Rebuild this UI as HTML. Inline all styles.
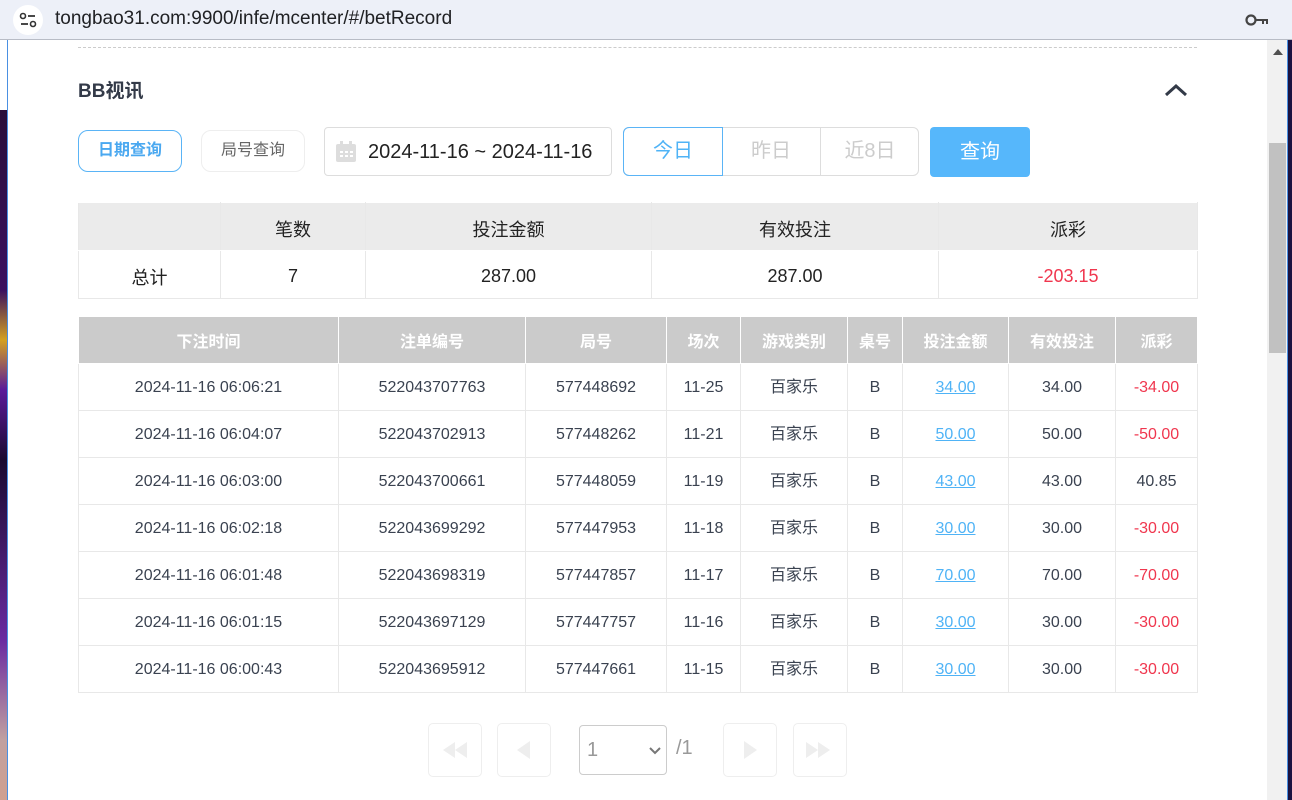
<!DOCTYPE html>
<html><head><meta charset="utf-8"><style>
*{box-sizing:border-box;margin:0;padding:0}
body{width:1292px;height:800px;overflow:hidden;background:#fff;font-family:"Liberation Sans","Noto Sans CJK SC",sans-serif;position:relative}
.abs{position:absolute}
.bar{left:0;top:0;width:1292px;height:40px;background:#edf0f8;border-bottom:1px solid #b8bcc6}
.url{left:55px;top:8px;font-size:19px;color:#202124}
.site{left:13px;top:5px;width:30px;height:30px;border-radius:50%;background:#fff}
.lstrip{left:0;top:40px;width:8px;height:760px;background:linear-gradient(#fff 0,#fff 70px,#2a0f3a 70px,#3a1060 250px,#d4a020 300px,#5a1a9a 350px,#1a0a30 420px,#6a2aa0 600px,#c0a0a0 700px,#d0a090 760px);border-right:1px solid #4a90e2}
.rstrip{left:1287px;top:40px;width:5px;height:760px;background:#1a1240;border-left:1px solid #4a90e2}
.sb{left:1267px;top:40px;width:20px;height:760px;background:#f1f1f1}
.thumb{left:1269px;top:143px;width:17px;height:210px;background:#c1c1c1}
.dash{left:78px;top:47px;width:1119px;border-top:1px dashed #ccc}
.title{left:78px;top:76px;font-size:19px;font-weight:bold;color:#333a48}
.btn{border-radius:10px;font-size:16px;text-align:center;line-height:40px;height:42px}
table{border-collapse:collapse;position:absolute}
td,th{text-align:center;border:1px solid #e8e8e8}
.sum td{height:48px;font-size:18px;color:#222;padding-top:4px}
.sum tr:first-child td{background:#ebebeb;border-color:#fff #e8e8e8}
.det th{background:#cbcbcb;color:#fff;font-size:16px;height:46px;border:1px solid #fff;border-top:0}
.det td{height:47px;font-size:16px;color:#3a4250;line-height:1;padding-top:2px}
.red{color:#f0364e!important}
.lnk{color:#4fb3f6!important;text-decoration:underline}
.pg{width:54px;height:54px;border:1px solid #eee;border-radius:5px;top:723px}
</style></head><body>
<div class="abs bar"></div>
<div class="abs site"><svg width="30" height="30"><circle cx="10" cy="11" r="2.5" fill="none" stroke="#333" stroke-width="1.6"/><line x1="15" y1="11" x2="22" y2="11" stroke="#333" stroke-width="1.8"/><line x1="8" y1="19" x2="15" y2="19" stroke="#333" stroke-width="1.8"/><circle cx="20" cy="19" r="2.5" fill="none" stroke="#333" stroke-width="1.6"/></svg></div>
<div class="abs url">tongbao31.com:9900/infe/mcenter/#/betRecord</div>
<svg class="abs" style="left:1245px;top:12px" width="26" height="16"><circle cx="6" cy="8" r="4.5" fill="none" stroke="#444" stroke-width="2.2"/><path d="M11 7h12v5h-2v-3h-2v3h-2v-3h-6z" fill="#444"/></svg>
<div class="abs lstrip"></div>
<div class="abs sb"></div><div class="abs thumb"></div>
<div class="abs" style="left:1273px;top:49px;width:0;height:0;border-left:5px solid transparent;border-right:5px solid transparent;border-bottom:6px solid #505050"></div>
<div class="abs rstrip"></div>
<div class="abs dash"></div>
<div class="abs title">BB视讯</div>
<svg class="abs" style="left:1163px;top:82px" width="26" height="16"><path d="M3 13L13 4L23 13" fill="none" stroke="#333a48" stroke-width="3"/></svg>
<div class="abs btn" style="left:78px;top:130px;width:104px;border:1px solid #5ab4f6;color:#4aa8f0;font-weight:bold">日期查询</div>
<div class="abs btn" style="left:201px;top:130px;width:104px;border:1px solid #eee;color:#666">局号查询</div>
<div class="abs" style="left:324px;top:127px;width:288px;height:49px;border:1px solid #ddd;border-radius:4px"></div>
<svg class="abs" style="left:335px;top:141px" width="22" height="22"><rect x="1" y="3" width="20" height="18" rx="2" fill="#ddd"/><rect x="5" y="0" width="3" height="5" fill="#ddd"/><rect x="14" y="0" width="3" height="5" fill="#ddd"/><g fill="#fff"><rect x="5" y="10" width="3" height="2"/><rect x="10" y="10" width="3" height="2"/><rect x="15" y="10" width="3" height="2"/><rect x="5" y="14" width="3" height="2"/><rect x="10" y="14" width="3" height="2"/><rect x="15" y="14" width="3" height="2"/></g></svg>
<div class="abs" style="left:368px;top:141px;font-size:20px;color:#222">2024-11-16 ~ 2024-11-16</div>
<div class="abs" style="left:623px;top:127px;width:296px;height:49px;border:1px solid #ddd;border-radius:6px"></div>
<div class="abs" style="left:623px;top:127px;width:100px;height:49px;border:1px solid #5ab4f6;border-radius:6px 0 0 6px;color:#4fb3f6;font-size:20px;text-align:center;line-height:47px">今日</div>
<div class="abs" style="left:722px;top:127px;width:99px;height:49px;border-right:1px solid #ddd;color:#ccc;font-size:20px;text-align:center;line-height:49px">昨日</div>
<div class="abs" style="left:821px;top:127px;width:98px;height:49px;color:#ccc;font-size:20px;text-align:center;line-height:49px">近8日</div>
<div class="abs" style="left:930px;top:127px;width:100px;height:50px;background:#56b7fb;border-radius:4px;color:#fff;font-size:20px;text-align:center;line-height:50px">查询</div>

<table class="sum" style="left:78px;top:202px;width:1120px">
<tr><td style="width:142px"></td><td style="width:145px">笔数</td><td style="width:286px">投注金额</td><td style="width:287px">有效投注</td><td>派彩</td></tr>
<tr><td>总计</td><td>7</td><td>287.00</td><td>287.00</td><td class="red">-203.15</td></tr>
</table>

<table class="det" style="left:78px;top:317px;width:1120px">
<tr><th style="width:260px">下注时间</th><th style="width:187px">注单编号</th><th style="width:141px">局号</th><th style="width:74px">场次</th><th style="width:107px">游戏类别</th><th style="width:55px">桌号</th><th style="width:106px">投注金额</th><th style="width:107px">有效投注</th><th>派彩</th></tr>
<tr><td>2024-11-16 06:06:21</td><td>522043707763</td><td>577448692</td><td>11-25</td><td>百家乐</td><td>B</td><td class="lnk">34.00</td><td>34.00</td><td class="red">-34.00</td></tr>
<tr><td>2024-11-16 06:04:07</td><td>522043702913</td><td>577448262</td><td>11-21</td><td>百家乐</td><td>B</td><td class="lnk">50.00</td><td>50.00</td><td class="red">-50.00</td></tr>
<tr><td>2024-11-16 06:03:00</td><td>522043700661</td><td>577448059</td><td>11-19</td><td>百家乐</td><td>B</td><td class="lnk">43.00</td><td>43.00</td><td>40.85</td></tr>
<tr><td>2024-11-16 06:02:18</td><td>522043699292</td><td>577447953</td><td>11-18</td><td>百家乐</td><td>B</td><td class="lnk">30.00</td><td>30.00</td><td class="red">-30.00</td></tr>
<tr><td>2024-11-16 06:01:48</td><td>522043698319</td><td>577447857</td><td>11-17</td><td>百家乐</td><td>B</td><td class="lnk">70.00</td><td>70.00</td><td class="red">-70.00</td></tr>
<tr><td>2024-11-16 06:01:15</td><td>522043697129</td><td>577447757</td><td>11-16</td><td>百家乐</td><td>B</td><td class="lnk">30.00</td><td>30.00</td><td class="red">-30.00</td></tr>
<tr><td>2024-11-16 06:00:43</td><td>522043695912</td><td>577447661</td><td>11-15</td><td>百家乐</td><td>B</td><td class="lnk">30.00</td><td>30.00</td><td class="red">-30.00</td></tr>
</table>

<div class="abs pg" style="left:428px"><svg width="52" height="52"><path d="M14 26l12-8v16zM26 26l12-8v16z" fill="#eee"/></svg></div>
<div class="abs pg" style="left:497px"><svg width="52" height="52"><path d="M19 26l13-9v18z" fill="#eee"/></svg></div>
<div class="abs" style="left:579px;top:725px;width:88px;height:50px;border:1px solid #ccc;border-radius:4px;font-size:20px;color:#999;line-height:48px;padding-left:7px">1<svg class="abs" style="left:68px;top:20px" width="14" height="10"><path d="M2 2l5 5 5-5" fill="none" stroke="#777" stroke-width="2"/></svg></div>
<div class="abs" style="left:676px;top:737px;font-size:20px;color:#999">/1</div>
<div class="abs pg" style="left:723px"><svg width="52" height="52"><path d="M20 17l13 9-13 9z" fill="#eee"/></svg></div>
<div class="abs pg" style="left:793px"><svg width="52" height="52"><path d="M12 18l12 8-12 8zM24 18l12 8-12 8z" fill="#eee"/></svg></div>
</body></html>
